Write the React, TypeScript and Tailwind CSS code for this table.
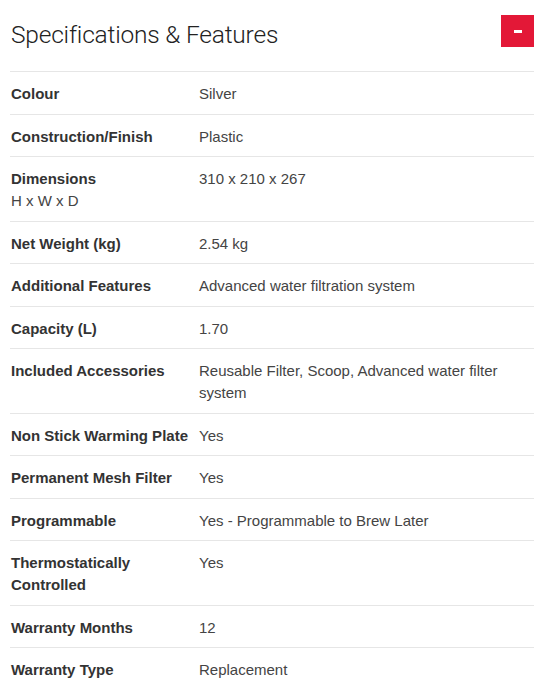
import React from "react";

const rows: { label: string; sub?: string; value: string }[] = [
  { label: "Colour", value: "Silver" },
  { label: "Construction/Finish", value: "Plastic" },
  { label: "Dimensions", sub: "H x W x D", value: "310 x 210 x 267" },
  { label: "Net Weight (kg)", value: "2.54 kg" },
  { label: "Additional Features", value: "Advanced water filtration system" },
  { label: "Capacity (L)", value: "1.70" },
  { label: "Included Accessories", value: "Reusable Filter, Scoop, Advanced water filter system" },
  { label: "Non Stick Warming Plate", value: "Yes" },
  { label: "Permanent Mesh Filter", value: "Yes" },
  { label: "Programmable", value: "Yes - Programmable to Brew Later" },
  { label: "Thermostatically Controlled", value: "Yes" },
  { label: "Warranty Months", value: "12" },
  { label: "Warranty Type", value: "Replacement" },
];

export default function App() {
  return (
    <div className="bg-white w-[557px] h-[700px] overflow-hidden pl-[10px] pr-[23px] font-['Liberation_Sans',Arial,sans-serif]">
      <div className="flex items-start justify-between h-[71px]">
        <h2 className="pt-[18px] pl-[1px] text-[24.5px] leading-[34px] text-[#222] font-light tracking-[-0.2px] font-['Roboto','Liberation_Sans',sans-serif]">
          Specifications &amp; Features
        </h2>
        <button className="mt-[15px] w-[33px] h-[32px] bg-[#e31837] flex items-center justify-center">
          <span className="block w-[8px] h-[3px] bg-white" />
        </button>
      </div>
      <div>
        {rows.map((r) => (
          <div key={r.label} className="flex border-t border-[#e6e6e6] pt-[11px] pb-[8.5px] text-[15px] leading-[22px] font-['Liberation_Sans',Arial,sans-serif]">
            <div className="w-[189px] shrink-0 pl-[1px] pr-[4px] font-bold text-[#333]">
              <div>{r.label}</div>
              {r.sub && <div className="font-normal text-[#444]">{r.sub}</div>}
            </div>
            <div className="flex-1 text-[#444] pr-[20px]">{r.value}</div>
          </div>
        ))}
      </div>
    </div>
  );
}
